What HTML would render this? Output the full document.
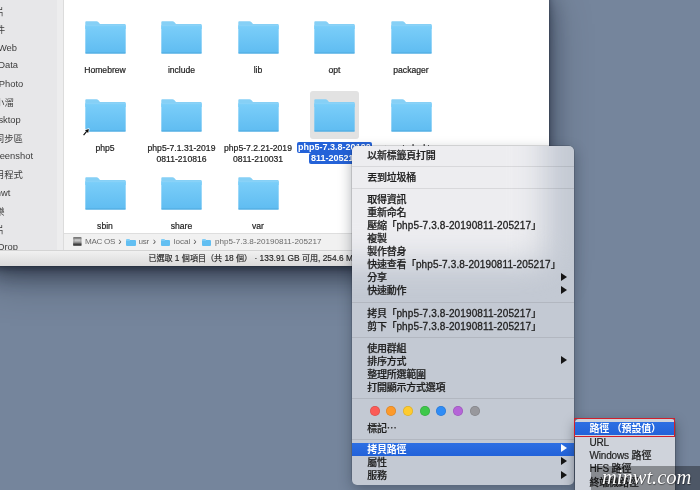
<!DOCTYPE html>
<html lang="zh-Hant">
<head>
<meta charset="utf-8">
<title>Finder</title>
<style>
html,body{margin:0;padding:0;}
body{width:700px;height:490px;overflow:hidden;position:relative;background:#75859c;
  font-family:"Liberation Sans","Noto Sans CJK TC",sans-serif;color:#222;}
*{box-sizing:border-box;}
#win,#menu,#sub,#wm{will-change:transform;}
#desk{position:absolute;left:0;top:0;width:700px;height:490px;
  background:linear-gradient(to bottom,#75859c 0,#75859c 100%);}
#win{position:absolute;left:-10px;top:-10px;width:559px;height:276.3px;background:#fff;
  box-shadow:0 3px 6px rgba(15,22,35,.4),0 10px 20px rgba(15,22,35,.5),0 14px 40px rgba(15,22,35,.3),0 0 1px rgba(0,0,0,.6);}
#side{position:absolute;left:10px;top:10px;width:57px;height:251px;background:#e7e7e9;}
#sidestrip{position:absolute;left:67px;top:10px;width:7px;height:251px;background:#ededee;border-right:1px solid #dcdcdc;}
.sb{position:absolute;font-size:9.4px;line-height:12px;color:#3d3d3d;white-space:nowrap;}
#pathbar{position:absolute;left:74px;top:243px;width:485px;height:17px;background:#f1f1f1;border-top:1px solid #dedede;
  font-size:8.1px;color:#6a6a6a;}
#status{position:absolute;left:10px;top:260px;width:549px;height:16.3px;background:linear-gradient(#f1f1f1,#dadada);border-top:1px solid #d4d4d4;
  font-size:8.4px;color:#242424;-webkit-text-stroke:.15px #242424;}
.f{position:absolute;width:41px;height:33px;}
.lb{-webkit-text-stroke:.2px #1e1e1e;position:absolute;width:90px;text-align:center;font-size:8.6px;line-height:11px;color:#1e1e1e;white-space:nowrap;}
#selbg{position:absolute;left:320px;top:100.6px;width:49.4px;height:48.4px;background:#e2e2e2;border-radius:3px;}
.hl{position:absolute;background:#2462d8;color:#fff;font-size:9px;line-height:11.4px;white-space:nowrap;border-radius:2px;text-align:center;font-weight:bold;}
#menu{position:absolute;left:352px;top:146px;width:222px;height:338.5px;border-radius:5px;
  background:#c3c9d3;overflow:hidden;}
#menush{position:absolute;left:351.7px;top:145.6px;width:222.2px;height:338.9px;border-radius:5px;
  box-shadow:0 5px 14px rgba(20,28,42,.36),0 0 0 .5px rgba(0,0,0,.25);}
#mwhite{position:absolute;left:-40px;top:-40px;width:232.6px;height:155.5px;background:#ededf0;filter:blur(16px);}
.mi{position:absolute;left:0;width:222.3px;height:13px;line-height:13px;font-size:10px;color:#1f1f1f;padding-left:15.2px;white-space:nowrap;font-weight:500;letter-spacing:-.25px;-webkit-text-stroke:.22px #1f1f1f;}
.sep{position:absolute;left:0;width:222.3px;height:1px;background:rgba(0,0,0,.085);}
.arr{position:absolute;right:7.6px;top:1.6px;width:0;height:0;border-left:6.8px solid #151515;border-top:4px solid transparent;border-bottom:4px solid transparent;}
.dot{position:absolute;width:10px;height:10px;border-radius:50%;box-shadow:inset 0 0 0 .7px rgba(0,0,0,.13);}
#sub{position:absolute;left:574.6px;top:418.6px;width:100.4px;height:90px;border-radius:4px;background:#cfd3db;overflow:hidden;}
#subsh{position:absolute;left:574.6px;top:418.6px;width:100.4px;height:90px;border-radius:4px;box-shadow:0 4px 12px rgba(20,28,42,.5),0 0 0 .5px rgba(0,0,0,.3);}
#redbox{position:absolute;left:574.4px;top:418.4px;width:101px;height:19.1px;border:1.9px solid #cf1f2c;}
.si{position:absolute;left:0;width:101px;height:13px;line-height:13px;font-size:10px;color:#1f1f1f;padding-left:14.4px;white-space:nowrap;font-weight:500;letter-spacing:-.15px;-webkit-text-stroke:.2px #1f1f1f;}
.pt{position:absolute;top:2px;line-height:11px;white-space:nowrap;}
.pc{position:absolute;margin-left:.7px;top:2.3px;line-height:11px;font-size:10px;color:#555;}
.pf{position:absolute;top:5.5px;width:9.4px;height:6.6px;background:#62bff2;border-radius:1px;}
.pf:before{content:"";position:absolute;left:0;top:-1px;width:4px;height:2px;background:#7fcdf6;border-radius:1px 1px 0 0;}
.hi{background:linear-gradient(#2d6fe3,#2262d9);color:#fff !important;font-weight:bold !important;-webkit-text-stroke:0 !important;}
.hi .arr{border-left-color:#fff;}
#wmband{position:absolute;left:590.5px;top:466px;width:110px;height:24px;background:rgba(0,0,0,.34);}
#wm{position:absolute;left:602px;top:463.5px;font-family:"Liberation Serif",serif;font-style:italic;font-size:20.5px;line-height:26px;color:#fff;
  text-shadow:0 0 1.5px rgba(0,0,0,.55),.5px .5px 1px rgba(0,0,0,.4);white-space:nowrap;}
.l{letter-spacing:.12px;-webkit-text-stroke:.3px #1f1f1f;}
.c{font-size:8.05px;}
</style>
</head>
<body>
<div id="desk"></div>
<div id="win">
  <div id="side"></div>
  <div id="sidestrip"></div>
  <div class="sb" style="top:16.3px;right:544.4px">圖片</div>
  <div class="sb" style="top:33.8px;right:543.8px">文件</div>
  <div class="sb" style="top:51.8px;right:532.0px">Web</div>
  <div class="sb" style="top:69.3px;right:531.0px">Data</div>
  <div class="sb" style="top:88.2px;right:525.7px">Photo</div>
  <div class="sb" style="top:106.8px;right:535.2px">小溜</div>
  <div class="sb" style="top:124.0px;right:528.2px">Desktop</div>
  <div class="sb" style="top:142.7px;right:526.0px">同步區</div>
  <div class="sb" style="top:160.0px;right:516.0px">Screenshot</div>
  <div class="sb" style="top:178.7px;right:526.0px">應用程式</div>
  <div class="sb" style="top:197.0px;right:538.6px">minwt</div>
  <div class="sb" style="top:215.7px;right:544.4px">音樂</div>
  <div class="sb" style="top:233.7px;right:544.4px">影片</div>
  <div class="sb" style="top:251.0px;right:531.0px">AirDrop</div>

  <div id="selbg"></div>
  <svg class="f" style="left:94.5px;top:31px" viewBox="0 0 41 33" width="41" height="33"><defs><linearGradient id="g1" x1="0" y1="0" x2="0" y2="1"><stop offset="0" stop-color="#7bcef9"/><stop offset="1" stop-color="#5fbcf1"/></linearGradient></defs><path d="M1.2 0.3 H11.5 Q12.6 0.3 13.3 1.1 L15 3 H39.8 Q40.7 3 40.7 3.9 V8 H0.3 V1.2 Q0.3 0.3 1.2 0.3 Z" fill="#86d0f6"/><path d="M0.3 4.6 H40.7 V31.6 Q40.7 32.6 39.7 32.6 H1.3 Q0.3 32.6 0.3 31.6 Z" fill="url(#g1)"/><rect x="0.3" y="31.6" width="40.4" height="1" rx=".5" fill="#4ea9dd"/><rect x="0.3" y="4.4" width="40.4" height=".7" fill="#8fd5f9"/></svg>
  <div class="lb" style="left:70px;top:74.5px">Homebrew</div>
  <svg class="f" style="left:171.0px;top:31px" viewBox="0 0 41 33" width="41" height="33"><defs><linearGradient id="g2" x1="0" y1="0" x2="0" y2="1"><stop offset="0" stop-color="#7bcef9"/><stop offset="1" stop-color="#5fbcf1"/></linearGradient></defs><path d="M1.2 0.3 H11.5 Q12.6 0.3 13.3 1.1 L15 3 H39.8 Q40.7 3 40.7 3.9 V8 H0.3 V1.2 Q0.3 0.3 1.2 0.3 Z" fill="#86d0f6"/><path d="M0.3 4.6 H40.7 V31.6 Q40.7 32.6 39.7 32.6 H1.3 Q0.3 32.6 0.3 31.6 Z" fill="url(#g2)"/><rect x="0.3" y="31.6" width="40.4" height="1" rx=".5" fill="#4ea9dd"/><rect x="0.3" y="4.4" width="40.4" height=".7" fill="#8fd5f9"/></svg>
  <div class="lb" style="left:146.5px;top:74.5px">include</div>
  <svg class="f" style="left:247.5px;top:31px" viewBox="0 0 41 33" width="41" height="33"><defs><linearGradient id="g3" x1="0" y1="0" x2="0" y2="1"><stop offset="0" stop-color="#7bcef9"/><stop offset="1" stop-color="#5fbcf1"/></linearGradient></defs><path d="M1.2 0.3 H11.5 Q12.6 0.3 13.3 1.1 L15 3 H39.8 Q40.7 3 40.7 3.9 V8 H0.3 V1.2 Q0.3 0.3 1.2 0.3 Z" fill="#86d0f6"/><path d="M0.3 4.6 H40.7 V31.6 Q40.7 32.6 39.7 32.6 H1.3 Q0.3 32.6 0.3 31.6 Z" fill="url(#g3)"/><rect x="0.3" y="31.6" width="40.4" height="1" rx=".5" fill="#4ea9dd"/><rect x="0.3" y="4.4" width="40.4" height=".7" fill="#8fd5f9"/></svg>
  <div class="lb" style="left:223px;top:74.5px">lib</div>
  <svg class="f" style="left:324.0px;top:31px" viewBox="0 0 41 33" width="41" height="33"><defs><linearGradient id="g4" x1="0" y1="0" x2="0" y2="1"><stop offset="0" stop-color="#7bcef9"/><stop offset="1" stop-color="#5fbcf1"/></linearGradient></defs><path d="M1.2 0.3 H11.5 Q12.6 0.3 13.3 1.1 L15 3 H39.8 Q40.7 3 40.7 3.9 V8 H0.3 V1.2 Q0.3 0.3 1.2 0.3 Z" fill="#86d0f6"/><path d="M0.3 4.6 H40.7 V31.6 Q40.7 32.6 39.7 32.6 H1.3 Q0.3 32.6 0.3 31.6 Z" fill="url(#g4)"/><rect x="0.3" y="31.6" width="40.4" height="1" rx=".5" fill="#4ea9dd"/><rect x="0.3" y="4.4" width="40.4" height=".7" fill="#8fd5f9"/></svg>
  <div class="lb" style="left:299.5px;top:74.5px">opt</div>
  <svg class="f" style="left:400.5px;top:31px" viewBox="0 0 41 33" width="41" height="33"><defs><linearGradient id="g5" x1="0" y1="0" x2="0" y2="1"><stop offset="0" stop-color="#7bcef9"/><stop offset="1" stop-color="#5fbcf1"/></linearGradient></defs><path d="M1.2 0.3 H11.5 Q12.6 0.3 13.3 1.1 L15 3 H39.8 Q40.7 3 40.7 3.9 V8 H0.3 V1.2 Q0.3 0.3 1.2 0.3 Z" fill="#86d0f6"/><path d="M0.3 4.6 H40.7 V31.6 Q40.7 32.6 39.7 32.6 H1.3 Q0.3 32.6 0.3 31.6 Z" fill="url(#g5)"/><rect x="0.3" y="31.6" width="40.4" height="1" rx=".5" fill="#4ea9dd"/><rect x="0.3" y="4.4" width="40.4" height=".7" fill="#8fd5f9"/></svg>
  <div class="lb" style="left:376px;top:74.5px">packager</div>
  <svg class="f" style="left:94.5px;top:108.5px" viewBox="0 0 41 33" width="41" height="33"><defs><linearGradient id="g6" x1="0" y1="0" x2="0" y2="1"><stop offset="0" stop-color="#7bcef9"/><stop offset="1" stop-color="#5fbcf1"/></linearGradient></defs><path d="M1.2 0.3 H11.5 Q12.6 0.3 13.3 1.1 L15 3 H39.8 Q40.7 3 40.7 3.9 V8 H0.3 V1.2 Q0.3 0.3 1.2 0.3 Z" fill="#86d0f6"/><path d="M0.3 4.6 H40.7 V31.6 Q40.7 32.6 39.7 32.6 H1.3 Q0.3 32.6 0.3 31.6 Z" fill="url(#g6)"/><rect x="0.3" y="31.6" width="40.4" height="1" rx=".5" fill="#4ea9dd"/><rect x="0.3" y="4.4" width="40.4" height=".7" fill="#8fd5f9"/></svg>
  <div class="lb" style="left:70px;top:152.5px">php5</div>
  <svg class="f" style="left:171.0px;top:108.5px" viewBox="0 0 41 33" width="41" height="33"><defs><linearGradient id="g7" x1="0" y1="0" x2="0" y2="1"><stop offset="0" stop-color="#7bcef9"/><stop offset="1" stop-color="#5fbcf1"/></linearGradient></defs><path d="M1.2 0.3 H11.5 Q12.6 0.3 13.3 1.1 L15 3 H39.8 Q40.7 3 40.7 3.9 V8 H0.3 V1.2 Q0.3 0.3 1.2 0.3 Z" fill="#86d0f6"/><path d="M0.3 4.6 H40.7 V31.6 Q40.7 32.6 39.7 32.6 H1.3 Q0.3 32.6 0.3 31.6 Z" fill="url(#g7)"/><rect x="0.3" y="31.6" width="40.4" height="1" rx=".5" fill="#4ea9dd"/><rect x="0.3" y="4.4" width="40.4" height=".7" fill="#8fd5f9"/></svg>
  <div class="lb" style="left:146.5px;top:152.5px">php5-7.1.31-2019<br>0811-210816</div>
  <svg class="f" style="left:247.5px;top:108.5px" viewBox="0 0 41 33" width="41" height="33"><defs><linearGradient id="g8" x1="0" y1="0" x2="0" y2="1"><stop offset="0" stop-color="#7bcef9"/><stop offset="1" stop-color="#5fbcf1"/></linearGradient></defs><path d="M1.2 0.3 H11.5 Q12.6 0.3 13.3 1.1 L15 3 H39.8 Q40.7 3 40.7 3.9 V8 H0.3 V1.2 Q0.3 0.3 1.2 0.3 Z" fill="#86d0f6"/><path d="M0.3 4.6 H40.7 V31.6 Q40.7 32.6 39.7 32.6 H1.3 Q0.3 32.6 0.3 31.6 Z" fill="url(#g8)"/><rect x="0.3" y="31.6" width="40.4" height="1" rx=".5" fill="#4ea9dd"/><rect x="0.3" y="4.4" width="40.4" height=".7" fill="#8fd5f9"/></svg>
  <div class="lb" style="left:223px;top:152.5px">php5-7.2.21-2019<br>0811-210031</div>
  <svg class="f" style="left:324.0px;top:108.5px" viewBox="0 0 41 33" width="41" height="33"><defs><linearGradient id="g9" x1="0" y1="0" x2="0" y2="1"><stop offset="0" stop-color="#7bcef9"/><stop offset="1" stop-color="#5fbcf1"/></linearGradient></defs><path d="M1.2 0.3 H11.5 Q12.6 0.3 13.3 1.1 L15 3 H39.8 Q40.7 3 40.7 3.9 V8 H0.3 V1.2 Q0.3 0.3 1.2 0.3 Z" fill="#86d0f6"/><path d="M0.3 4.6 H40.7 V31.6 Q40.7 32.6 39.7 32.6 H1.3 Q0.3 32.6 0.3 31.6 Z" fill="url(#g9)"/><rect x="0.3" y="31.6" width="40.4" height="1" rx=".5" fill="#4ea9dd"/><rect x="0.3" y="4.4" width="40.4" height=".7" fill="#8fd5f9"/></svg>
  <svg class="f" style="left:400.5px;top:108.5px" viewBox="0 0 41 33" width="41" height="33"><defs><linearGradient id="g10" x1="0" y1="0" x2="0" y2="1"><stop offset="0" stop-color="#7bcef9"/><stop offset="1" stop-color="#5fbcf1"/></linearGradient></defs><path d="M1.2 0.3 H11.5 Q12.6 0.3 13.3 1.1 L15 3 H39.8 Q40.7 3 40.7 3.9 V8 H0.3 V1.2 Q0.3 0.3 1.2 0.3 Z" fill="#86d0f6"/><path d="M0.3 4.6 H40.7 V31.6 Q40.7 32.6 39.7 32.6 H1.3 Q0.3 32.6 0.3 31.6 Z" fill="url(#g10)"/><rect x="0.3" y="31.6" width="40.4" height="1" rx=".5" fill="#4ea9dd"/><rect x="0.3" y="4.4" width="40.4" height=".7" fill="#8fd5f9"/></svg>
  <div class="lb" style="left:376px;top:152.5px">remotedesktop</div>
  <svg class="f" style="left:94.5px;top:186.5px" viewBox="0 0 41 33" width="41" height="33"><defs><linearGradient id="g11" x1="0" y1="0" x2="0" y2="1"><stop offset="0" stop-color="#7bcef9"/><stop offset="1" stop-color="#5fbcf1"/></linearGradient></defs><path d="M1.2 0.3 H11.5 Q12.6 0.3 13.3 1.1 L15 3 H39.8 Q40.7 3 40.7 3.9 V8 H0.3 V1.2 Q0.3 0.3 1.2 0.3 Z" fill="#86d0f6"/><path d="M0.3 4.6 H40.7 V31.6 Q40.7 32.6 39.7 32.6 H1.3 Q0.3 32.6 0.3 31.6 Z" fill="url(#g11)"/><rect x="0.3" y="31.6" width="40.4" height="1" rx=".5" fill="#4ea9dd"/><rect x="0.3" y="4.4" width="40.4" height=".7" fill="#8fd5f9"/></svg>
  <div class="lb" style="left:70px;top:230.5px">sbin</div>
  <svg class="f" style="left:171.0px;top:186.5px" viewBox="0 0 41 33" width="41" height="33"><defs><linearGradient id="g12" x1="0" y1="0" x2="0" y2="1"><stop offset="0" stop-color="#7bcef9"/><stop offset="1" stop-color="#5fbcf1"/></linearGradient></defs><path d="M1.2 0.3 H11.5 Q12.6 0.3 13.3 1.1 L15 3 H39.8 Q40.7 3 40.7 3.9 V8 H0.3 V1.2 Q0.3 0.3 1.2 0.3 Z" fill="#86d0f6"/><path d="M0.3 4.6 H40.7 V31.6 Q40.7 32.6 39.7 32.6 H1.3 Q0.3 32.6 0.3 31.6 Z" fill="url(#g12)"/><rect x="0.3" y="31.6" width="40.4" height="1" rx=".5" fill="#4ea9dd"/><rect x="0.3" y="4.4" width="40.4" height=".7" fill="#8fd5f9"/></svg>
  <div class="lb" style="left:146.5px;top:230.5px">share</div>
  <svg class="f" style="left:247.5px;top:186.5px" viewBox="0 0 41 33" width="41" height="33"><defs><linearGradient id="g13" x1="0" y1="0" x2="0" y2="1"><stop offset="0" stop-color="#7bcef9"/><stop offset="1" stop-color="#5fbcf1"/></linearGradient></defs><path d="M1.2 0.3 H11.5 Q12.6 0.3 13.3 1.1 L15 3 H39.8 Q40.7 3 40.7 3.9 V8 H0.3 V1.2 Q0.3 0.3 1.2 0.3 Z" fill="#86d0f6"/><path d="M0.3 4.6 H40.7 V31.6 Q40.7 32.6 39.7 32.6 H1.3 Q0.3 32.6 0.3 31.6 Z" fill="url(#g13)"/><rect x="0.3" y="31.6" width="40.4" height="1" rx=".5" fill="#4ea9dd"/><rect x="0.3" y="4.4" width="40.4" height=".7" fill="#8fd5f9"/></svg>
  <div class="lb" style="left:223px;top:230.5px">var</div>
  <div class="hl" style="left:307.1px;top:151.9px;width:74.6px;height:11.6px">php5-7.3.8-20190</div>
  <div class="hl" style="left:318.8px;top:163.2px;width:51.8px;height:11px">811-205217</div>
  <svg style="position:absolute;left:92.3px;top:138.3px" width="8.4" height="8.4" viewBox="0 0 9 9"><g stroke="#fff" stroke-width="1.6" stroke-linejoin="round" fill="#fff" opacity=".9"><path d="M1.7 7.7 L5 3.7" stroke-width="2.6"/><path d="M7.3 1 L3.2 2.3 L6.6 5.3 Z"/></g><path d="M1.7 7.7 L5 3.7" stroke="#0c0c0c" stroke-width="1.25" fill="none"/><path d="M7.3 1 L3.2 2.3 L6.6 5.3 Z" fill="#0c0c0c"/></svg>

  <div id="pathbar">
    <svg style="position:absolute;left:9px;top:3px" width="9" height="9" viewBox="0 0 9 9"><defs><linearGradient id="dk" x1="0" y1="0" x2="0" y2="1"><stop offset="0" stop-color="#707070"/><stop offset=".18" stop-color="#8c8c8c"/><stop offset=".35" stop-color="#b8b8b8"/><stop offset=".6" stop-color="#9a9a9a"/><stop offset=".8" stop-color="#484848"/><stop offset="1" stop-color="#2a2a2a"/></linearGradient></defs><rect x=".1" y="0" width="8.5" height="8.8" rx=".9" fill="url(#dk)"/><rect x="2" y="2.2" width="5" height="2.2" fill="#d6d6d6" opacity=".55"/></svg>
    <span class="pt" style="left:21px;letter-spacing:-.3px">MAC OS</span><span class="pc" style="left:53.5px">›</span>
    <span class="pf" style="left:62.4px"></span><span class="pt" style="left:74.6px;letter-spacing:-.35px">usr</span><span class="pc" style="left:88px">›</span>
    <span class="pf" style="left:97px"></span><span class="pt" style="left:109.6px">local</span><span class="pc" style="left:128.5px">›</span>
    <span class="pf" style="left:138px"></span><span class="pt" style="left:151px">php5-7.3.8-20190811-205217</span>
  </div>
  <div id="status"><span style="position:absolute;left:148.4px;top:1px;line-height:12px;white-space:nowrap"><span class=c>已選取</span> 1 <span class=c>個項目（共</span> 18 <span class=c>個）</span> · 133.91 GB <span class=c>可用</span>, 254.6 MB <span class=c>已使用</span></span></div>
</div>

<div id="menush"></div>
<div id="menu">
  <div id="mwhite"></div>
  <div class="mi" style="top:2.5px">以新標籤頁打開</div>
  <div class="sep" style="top:20.0px"></div>
  <div class="mi" style="top:24.5px">丟到垃圾桶</div>
  <div class="sep" style="top:42.0px"></div>
  <div class="mi" style="top:46.5px">取得資訊</div>
  <div class="mi" style="top:59.5px">重新命名</div>
  <div class="mi" style="top:72.5px">壓縮「<span class=l>php5-7.3.8-20190811-205217</span>」</div>
  <div class="mi" style="top:85.5px">複製</div>
  <div class="mi" style="top:98.5px">製作替身</div>
  <div class="mi" style="top:112.0px">快速查看「<span class=l>php5-7.3.8-20190811-205217</span>」</div>
  <div class="mi" style="top:125.0px">分享<span class="arr"></span></div>
  <div class="mi" style="top:138.0px">快速動作<span class="arr"></span></div>
  <div class="sep" style="top:155.8px"></div>
  <div class="mi" style="top:160.5px">拷貝「<span class=l>php5-7.3.8-20190811-205217</span>」</div>
  <div class="mi" style="top:173.5px">剪下「<span class=l>php5-7.3.8-20190811-205217</span>」</div>
  <div class="sep" style="top:190.8px"></div>
  <div class="mi" style="top:195.5px">使用群組</div>
  <div class="mi" style="top:208.5px">排序方式<span class="arr"></span></div>
  <div class="mi" style="top:221.5px">整理所選範圍</div>
  <div class="mi" style="top:234.5px">打開顯示方式選項</div>
  <div class="sep" style="top:251.8px"></div>
  <span class="dot" style="left:17.5px;top:260.2px;background:#fc5b57"></span>
  <span class="dot" style="left:34.2px;top:260.2px;background:#fd9a2b"></span>
  <span class="dot" style="left:50.9px;top:260.2px;background:#fecb2f"></span>
  <span class="dot" style="left:67.6px;top:260.2px;background:#3ec84a"></span>
  <span class="dot" style="left:84.3px;top:260.2px;background:#2f8cf6"></span>
  <span class="dot" style="left:101.0px;top:260.2px;background:#b565d8"></span>
  <span class="dot" style="left:117.7px;top:260.2px;background:#98989d"></span>
  <div class="mi" style="top:275.5px">標記⋯</div>
  <div class="sep" style="top:292.5px"></div>
  <div class="mi hi" style="top:296.5px">拷貝路徑<span class="arr"></span></div>
  <div class="mi" style="top:309.5px">屬性<span class="arr"></span></div>
  <div class="mi" style="top:323.0px">服務<span class="arr"></span></div>
</div>
<div id="subsh"></div>
<div id="sub">
  <div class="si hi" style="top:3.4px">路徑 （預設值）</div>
  <div class="si" style="top:16.8px">URL</div>
  <div class="si" style="top:30.1px">Windows 路徑</div>
  <div class="si" style="top:43.4px">HFS 路徑</div>
  <div class="si" style="top:56.7px">終端機路徑</div>
</div>
<div id="redbox"></div>
<div id="wmband"></div>
<div id="wm">minwt.com</div>
</body>
</html>
